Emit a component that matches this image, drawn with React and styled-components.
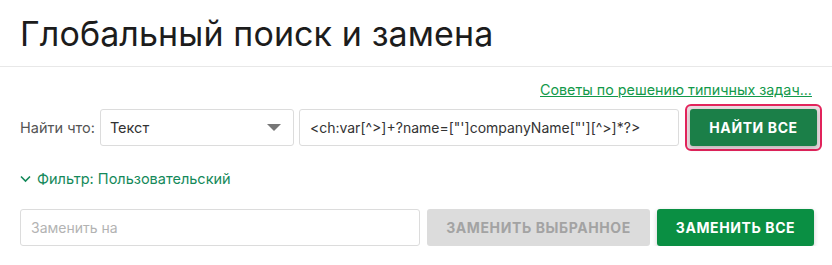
import React from "react";
import styled, { createGlobalStyle } from "styled-components";

const GlobalStyle = createGlobalStyle`
  body {
    margin: 0;
    background: #ffffff;
    font-family: "Inter", "Noto Sans", sans-serif;
    color: #222;
  }
`;

const Header = styled.header`
  height: 67px;
  border-bottom: 1px solid #e8e8e8;
  padding: 0 20px;
  box-sizing: border-box;
  display: flex;
  align-items: center;
`;

const Title = styled.h1`
  margin: 0;
  font-size: 34px;
  font-weight: 400;
  letter-spacing: 0.1px;
  color: #1c1c1c;
`;

const Body = styled.div`
  padding: 14px 10px 0 20px;
  display: flex;
  flex-direction: column;
`;

const HelpLink = styled.a`
  align-self: flex-end;
  margin-right: 10px;
  font-size: 14.3px;
  color: #12994a;
  text-decoration: underline;
  cursor: pointer;
`;

const Row = styled.div`
  display: flex;
  align-items: center;
  gap: ${(p) => p.$gap || 6}px;
  margin-top: ${(p) => p.$top || 0}px;
`;

const Label = styled.span`
  font-size: 14.5px;
  color: #555;
`;

const Select = styled.div`
  width: 194px;
  height: 37px;
  box-sizing: border-box;
  border: 1px solid #dcdcdc;
  border-radius: 3px;
  display: flex;
  align-items: center;
  justify-content: space-between;
  padding: 0 12px 0 9px;
  font-size: 14.5px;
  color: #333;
`;

const Caret = styled.span`
  width: 0;
  height: 0;
  border-left: 7px solid transparent;
  border-right: 7px solid transparent;
  border-top: 7px solid #777;
`;

const Input = styled.div`
  flex: ${(p) => (p.$width ? "none" : 1)};
  width: ${(p) => (p.$width ? `${p.$width}px` : "auto")};
  height: 37px;
  box-sizing: border-box;
  border: 1px solid #dcdcdc;
  border-radius: 3px;
  display: flex;
  align-items: center;
  padding: 0 10px;
  font-size: 14px;
  color: ${(p) => (p.$placeholder ? "#b3b3b3" : "#333")};
  white-space: nowrap;
  overflow: hidden;
`;

const Button = styled.button`
  height: 37px;
  width: ${(p) => p.$width}px;
  border: none;
  border-radius: 3px;
  font-family: "Inter", "Noto Sans", sans-serif;
  font-size: 14px;
  font-weight: 700;
  text-transform: uppercase;
  letter-spacing: 0.6px;
  background: ${(p) => (p.$disabled ? "#dcdcdc" : p.$dark ? "#1b7f48" : "#0a8f43")};
  color: ${(p) => (p.$disabled ? "#a3a3a3" : "#ffffff")};
  box-shadow: ${(p) => (p.$disabled ? "none" : "0 2px 5px rgba(0,0,0,0.2)")};
  padding: 0;
  cursor: pointer;
`;

const FocusRing = styled.div`
  margin-left: 1px;
  padding: 3px;
  border: 2px solid #e3245c;
  border-radius: 6px;
  background: #eadde1;
  display: flex;
`;

const Filter = styled.div`
  margin-top: 19px;
  display: flex;
  align-items: center;
  gap: 6px;
  font-size: 14.5px;
  color: #14895a;
`;

export default function App() {
  return (
    <>
      <GlobalStyle />
      <Header>
        <Title>Глобальный поиск и замена</Title>
      </Header>
      <Body>
        <HelpLink>Советы по решению типичных задач...</HelpLink>
        <Row $top={6} $gap={5}>
          <Label>Найти что:</Label>
          <Select>
            Текст
            <Caret />
          </Select>
          <Input>{`<ch:var[^>]+?name=["']companyName["'][^>]*?>`}</Input>
          <FocusRing>
            <Button $width={127} $dark>
              Найти все
            </Button>
          </FocusRing>
        </Row>
        <Filter>
          <svg width="11" height="8" viewBox="0 0 11 8">
            <path d="M1 1.5 L5.5 6 L10 1.5" fill="none" stroke="#14895a" strokeWidth="1.6" />
          </svg>
          Фильтр: Пользовательский
        </Filter>
        <Row $top={22} $gap={7}>
          <Input $width={400} $placeholder>
            Заменить на
          </Input>
          <Button $width={223} $disabled>
            Заменить выбранное
          </Button>
          <Button $width={157}>Заменить все</Button>
        </Row>
      </Body>
    </>
  );
}
